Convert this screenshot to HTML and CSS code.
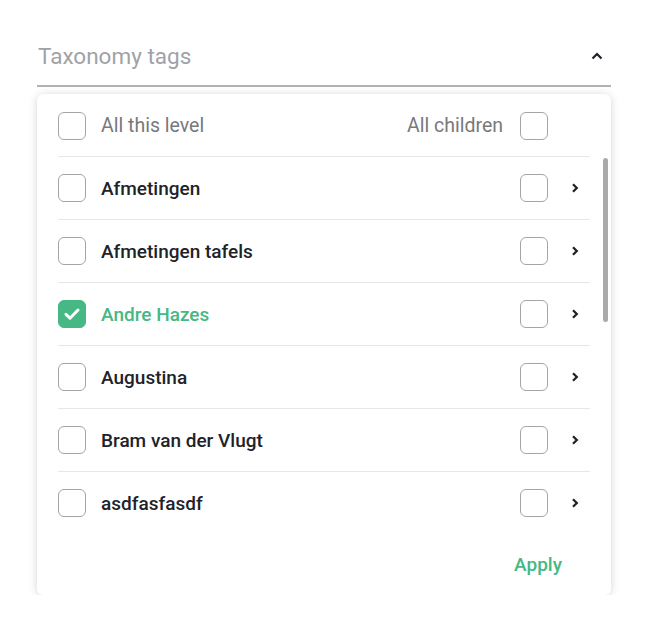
FILE: index.html
```html
<!DOCTYPE html>
<html>
<head>
<meta charset="utf-8">
<link rel="stylesheet" href="styles.css">
</head>
<body>
<div class="wrap">
  <div class="field">
    <span class="field-label">Taxonomy tags</span>
    <svg class="caret" width="12" height="8" viewBox="0 0 12 8"><path d="M1.5 6.5 L6 2 L10.5 6.5" fill="none" stroke="#1f2329" stroke-width="2.2"/></svg>
  </div>
  <div class="card">
    <div class="row head">
      <span class="cb"></span>
      <span class="name muted">All this level</span>
      <span class="muted all-children">All children</span>
      <span class="cb"></span>
      <span class="chev-space"></span>
    </div>
    <div class="list">
      <div class="row">
        <span class="cb"></span><span class="name">Afmetingen</span>
        <span class="cb"></span>
        <svg class="chev" width="8" height="10" viewBox="0 0 8 10"><path d="M2 1.2 L5.8 5 L2 8.8" fill="none" stroke="#1f2329" stroke-width="2.3"/></svg>
      </div>
      <div class="row">
        <span class="cb"></span><span class="name">Afmetingen tafels</span>
        <span class="cb"></span>
        <svg class="chev" width="8" height="10" viewBox="0 0 8 10"><path d="M2 1.2 L5.8 5 L2 8.8" fill="none" stroke="#1f2329" stroke-width="2.3"/></svg>
      </div>
      <div class="row">
        <span class="cb on"><svg width="20" height="20" viewBox="0 0 20 20"><path d="M4 10.4 L8 14.2 L16 6" fill="none" stroke="#fff" stroke-width="3" stroke-linecap="round" stroke-linejoin="round"/></svg></span><span class="name green">Andre Hazes</span>
        <span class="cb"></span>
        <svg class="chev" width="8" height="10" viewBox="0 0 8 10"><path d="M2 1.2 L5.8 5 L2 8.8" fill="none" stroke="#1f2329" stroke-width="2.3"/></svg>
      </div>
      <div class="row">
        <span class="cb"></span><span class="name">Augustina</span>
        <span class="cb"></span>
        <svg class="chev" width="8" height="10" viewBox="0 0 8 10"><path d="M2 1.2 L5.8 5 L2 8.8" fill="none" stroke="#1f2329" stroke-width="2.3"/></svg>
      </div>
      <div class="row">
        <span class="cb"></span><span class="name">Bram van der Vlugt</span>
        <span class="cb"></span>
        <svg class="chev" width="8" height="10" viewBox="0 0 8 10"><path d="M2 1.2 L5.8 5 L2 8.8" fill="none" stroke="#1f2329" stroke-width="2.3"/></svg>
      </div>
      <div class="row last">
        <span class="cb"></span><span class="name">asdfasfasdf</span>
        <span class="cb"></span>
        <svg class="chev" width="8" height="10" viewBox="0 0 8 10"><path d="M2 1.2 L5.8 5 L2 8.8" fill="none" stroke="#1f2329" stroke-width="2.3"/></svg>
      </div>
      <div class="thumb"></div>
    </div>
    <div class="footer">
      <span class="apply">Apply</span>
    </div>
  </div>
</div>
</body>
</html>
```
FILE: styles.css
```css
* { box-sizing: border-box; }
body {
  margin: 0;
  background: #fff;
  font-family: Roboto, "Liberation Sans", sans-serif;
}
.wrap {
  width: 574px;
  margin-left: 37px;
  padding-top: 43px;
}
.field {
  display: flex;
  align-items: center;
  justify-content: space-between;
  padding: 0 8px 16px 1px;
  border-bottom: 2px solid #b0b1b3;
}
.field-label {
  font-size: 22.5px;
  line-height: 26px;
  color: #9fa2a6;
}
.caret { display: block; }
.card {
  margin-top: 7px;
  background: #fff;
  border-radius: 6px;
  box-shadow: 0 1px 8px rgba(0, 0, 0, 0.17);
  padding-top: 1px;
}
.row {
  display: flex;
  align-items: center;
  height: 63px;
  margin: 0 21px;
  border-bottom: 1px solid #e6e6e6;
  font-size: 19px;
}
.row.head { height: 62px; }
.row.last { border-bottom: none; height: 62px; }
.list { position: relative; }
.cb {
  width: 28px;
  height: 28px;
  border: 1.5px solid #a4a5a7;
  border-radius: 6px;
  flex: none;
  display: flex;
  align-items: center;
  justify-content: center;
}
.cb.on {
  background: #46b883;
  border-color: #46b883;
}
.name {
  flex: 1;
  margin-left: 15px;
  font-weight: 500;
  color: #1e2329;
}
.muted {
  color: #77797c;
  font-weight: 400;
  font-size: 19.5px;
}
.all-children { margin-right: 17px; }
.green { color: #46b883; }
.chev { display: block; margin-left: 23px; margin-right: 11px; flex: none; }
.chev-space { width: 42px; flex: none; }
.thumb {
  position: absolute;
  right: 3px;
  top: 1px;
  width: 5px;
  height: 164px;
  border-radius: 3px;
  background: #a9aaac;
}
.footer {
  display: flex;
  justify-content: flex-end;
  padding: 19px 49px 18px 0;
}
.apply {
  font-size: 19px;
  line-height: 24px;
  font-weight: 500;
  color: #46b883;
}
```
